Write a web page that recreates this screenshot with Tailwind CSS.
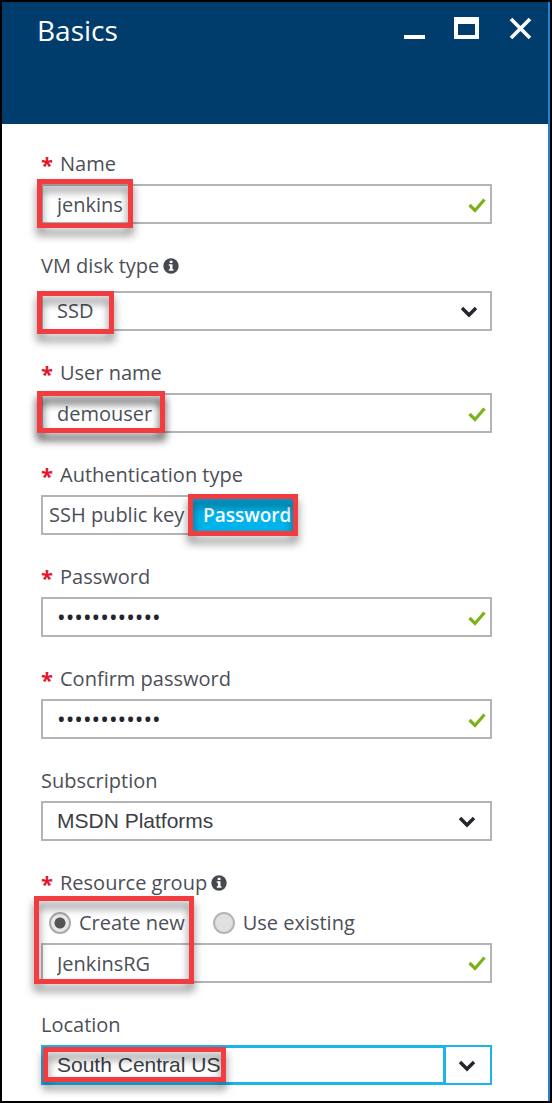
<!DOCTYPE html>
<html lang="en">
<head>
<meta charset="utf-8">
<meta name="viewport" content="width=device-width, initial-scale=1">
<title>Basics</title>
<script src="https://cdn.jsdelivr.net/npm/@tailwindcss/browser@4"></script>
</head>
<body class="min-h-screen bg-black p-0.5 font-['Open_Sans',sans-serif] text-[20px] text-[#4c4f58]">
<svg class="hidden" aria-hidden="true">
  <symbol id="tick" viewBox="0 0 18 15"><path d="M1.5 7 L7 12.5 L16.5 1.500" fill="none" stroke="#7ab317" stroke-width="3.2"/></symbol>
  <symbol id="chevron" viewBox="0 0 18 12"><path d="M2 2 L9 9 L16 2" fill="none" stroke="#23252d" stroke-width="3.4"/></symbol>
  <symbol id="info" viewBox="0 0 16 16"><circle cx="8" cy="8" r="7.7" fill="#45484f"/><path d="M6.7 2.7h2.8v2.4H6.7z M5.8 6.3h3.7v5h1v1.500H5.8v-1.500h1.1V7.8H5.8z" fill="#fff"/></symbol>
</svg>
<main class="border-r-2 border-[#2382d2] bg-white pb-4">
  <header class="flex h-[122px] items-start justify-between bg-[#003c6c] pr-4 pl-[35px] text-white">
    <h1 class="pt-2 text-[28px] leading-10">Basics</h1>
    <div class="flex gap-7 pt-3.5">
      <button type="button" aria-label="Minimize"><svg class="h-6 w-6" viewBox="0 0 24 24"><path d="M2 19h21v4H2z" fill="#fff"/></svg></button>
      <button type="button" aria-label="Maximize"><svg class="h-6 w-[26px]" viewBox="0 0 26 24"><path d="M0 1h25v22H0z M4 8v11h17V8z" fill="#fff" fill-rule="evenodd"/></svg></button>
      <button type="button" aria-label="Close"><svg class="h-6 w-6" viewBox="0 0 24 24"><path d="M3 3 L22 22 M22 3 L3 22" stroke="#fff" stroke-width="3.600"/></svg></button>
    </div>
  </header>

  <form class="flex flex-col gap-[22px] pt-5 pr-14 pl-[39px]">
    <div>
      <label for="name" class="flex h-10 items-center gap-2"><span class="w-[11px] text-[22px] font-bold text-[#e3182d]">*</span>Name</label>
      <div class="relative">
        <input id="name" type="text" value="jenkins" class="block h-10 w-full border-2 border-[#b4b4b4] bg-white px-3.5">
        <svg class="absolute top-3.5 right-1.5 h-[15px] w-[18px]"><use href="#tick"/></svg>
        <span class="pointer-events-none absolute -top-[5px] -left-1 h-[49px] w-24 border-5 border-[#f23c3f] drop-shadow-[0_7px_4px_rgba(0,0,0,0.5)]"></span>
      </div>
    </div>

    <div>
      <label for="disk" class="mb-[5px] flex h-10 items-center gap-1">VM disk type<svg class="h-4 w-4"><use href="#info"/></svg></label>
      <div class="relative">
        <select id="disk" class="block h-10 w-full appearance-none border-2 border-[#b4b4b4] bg-white px-3.5"><option>SSD</option></select>
        <svg class="pointer-events-none absolute top-[15px] right-3.5 h-3 w-[18px]"><use href="#chevron"/></svg>
        <span class="pointer-events-none absolute top-0 -left-1 h-[43px] w-[77px] border-5 border-[#f23c3f] drop-shadow-[0_7px_4px_rgba(0,0,0,0.5)]"></span>
      </div>
    </div>

    <div>
      <label for="user" class="flex h-10 items-center gap-2"><span class="w-[11px] text-[22px] font-bold text-[#e3182d]">*</span>User name</label>
      <div class="relative">
        <input id="user" type="text" value="demouser" class="block h-10 w-full border-2 border-[#b4b4b4] bg-white px-3.5">
        <svg class="absolute top-3.5 right-1.5 h-[15px] w-[18px]"><use href="#tick"/></svg>
        <span class="pointer-events-none absolute -top-0.5 -left-1 h-[42px] w-32 border-5 border-[#f23c3f] drop-shadow-[0_7px_4px_rgba(0,0,0,0.8)]"></span>
      </div>
    </div>

    <div role="group" aria-labelledby="auth">
      <div id="auth" class="flex h-10 items-center gap-2"><span class="w-[11px] text-[22px] font-bold text-[#e3182d]">*</span>Authentication type</div>
      <div class="relative flex">
        <button type="button" class="h-10 w-[152px] border-2 border-[#b4b4b4] bg-white pl-1.5 text-left whitespace-nowrap">SSH public key</button>
        <button type="button" aria-pressed="true" class="h-10 w-[105px] bg-[#00b3ea] pl-2.5 text-left text-[19px] font-semibold text-white">Password</button>
        <span class="pointer-events-none absolute -top-px left-[147px] h-[42px] w-[110px] border-5 border-[#f23c3f] drop-shadow-[0_7px_4px_rgba(0,0,0,0.5)]"></span>
      </div>
    </div>

    <div>
      <label for="pw" class="flex h-10 items-center gap-2"><span class="w-[11px] text-[22px] font-bold text-[#e3182d]">*</span>Password</label>
      <div class="relative">
        <input id="pw" type="password" value="demopassword" class="block h-10 w-full border-2 border-[#b4b4b4] bg-white px-3.5 text-[23px] text-[#23252d]">
        <svg class="absolute top-3.5 right-1.5 h-[15px] w-[18px]"><use href="#tick"/></svg>
      </div>
    </div>

    <div>
      <label for="pw2" class="flex h-10 items-center gap-2"><span class="w-[11px] text-[22px] font-bold text-[#e3182d]">*</span>Confirm password</label>
      <div class="relative">
        <input id="pw2" type="password" value="demopassword" class="block h-10 w-full border-2 border-[#b4b4b4] bg-white px-3.5 text-[23px] text-[#23252d]">
        <svg class="absolute top-3.5 right-1.5 h-[15px] w-[18px]"><use href="#tick"/></svg>
      </div>
    </div>

    <div>
      <label for="sub" class="flex h-10 items-center">Subscription</label>
      <div class="relative">
        <select id="sub" class="block h-10 w-full appearance-none border-2 border-[#b4b4b4] bg-white px-3.5 font-['Liberation_Sans',sans-serif] text-[21px] text-[#3c3e46]"><option>MSDN Platforms</option></select>
        <svg class="pointer-events-none absolute top-[15px] right-4 h-3 w-[18px]"><use href="#chevron"/></svg>
      </div>
    </div>

    <div role="group" aria-labelledby="rg">
      <label id="rg" for="rgname" class="flex h-10 items-center gap-1"><span class="mr-1 w-[11px] text-[22px] font-bold text-[#e3182d]">*</span>Resource group<svg class="h-4 w-4"><use href="#info"/></svg></label>
      <div class="relative">
        <div class="flex h-10 items-center gap-7 pl-2">
          <label class="flex items-center gap-2"><input type="radio" name="rgmode" checked class="h-[22px] w-[22px] appearance-none rounded-full border-2 border-[#a9a9a9] bg-[#e9e9e9] checked:bg-[radial-gradient(circle,#555_5px,#e9e9e9_6px)]">Create new</label>
          <label class="flex items-center gap-2"><input type="radio" name="rgmode" class="h-[22px] w-[22px] appearance-none rounded-full border-2 border-[#b4b4b4] bg-[#e0e0e0]">Use existing</label>
        </div>
        <input id="rgname" type="text" value="JenkinsRG" class="block h-10 w-full border-2 border-[#b4b4b4] bg-white px-3.5">
        <svg class="absolute right-1.5 bottom-3 h-[15px] w-[18px]"><use href="#tick"/></svg>
        <span class="pointer-events-none absolute -top-[7px] -left-[7px] h-[88px] w-40 border-5 border-[#f23c3f] drop-shadow-[0_7px_4px_rgba(0,0,0,0.5)]"></span>
      </div>
    </div>

    <div>
      <label for="loc" class="flex h-10 items-center">Location</label>
      <div class="relative">
        <select id="loc" class="block h-10 w-full appearance-none border-2 border-[#1cb4ea] bg-white px-3.5 font-['Liberation_Sans',sans-serif] text-[21px] text-[#3c3e46]"><option>South Central US</option></select>
        <span class="pointer-events-none absolute inset-y-0 right-0 left-0 mr-[46px] border-3 border-[#1cb4ea]"></span>
        <svg class="pointer-events-none absolute top-[15px] right-4 h-3 w-[18px]"><use href="#chevron"/></svg>
        <span class="pointer-events-none absolute top-0.5 left-0.5 h-[35px] w-[183px] border-5 border-[#f23c3f] drop-shadow-[0_7px_4px_rgba(0,0,0,0.5)]"></span>
      </div>
    </div>
  </form>
</main>
</body>
</html>
